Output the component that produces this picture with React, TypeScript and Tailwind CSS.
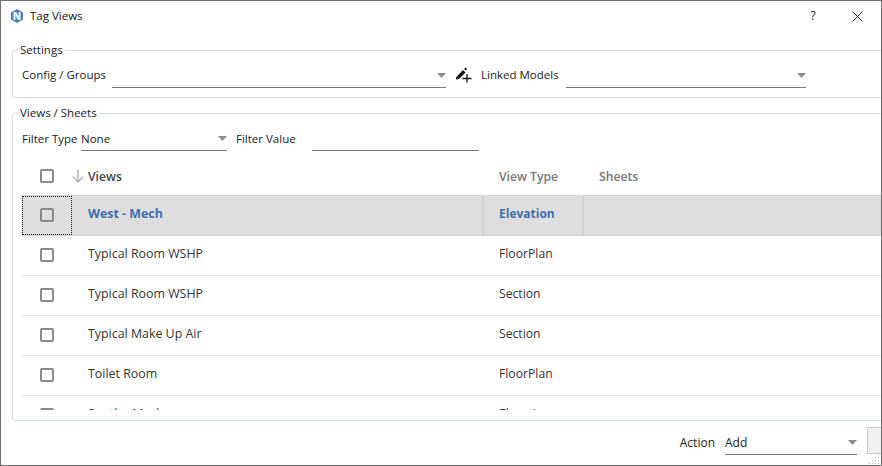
const rows = [
  { name: 'Typical Room WSHP', type: 'FloorPlan' },
  { name: 'Typical Room WSHP', type: 'Section' },
  { name: 'Typical Make Up Air', type: 'Section' },
  { name: 'Toilet Room', type: 'FloorPlan' },
  { name: 'South - Mech', type: 'Elevation' },
];

function Caret() {
  return (
    <svg width="9" height="5" viewBox="0 0 9 5" className="shrink-0">
      <path d="M0 0h9L4.5 5z" fill="#8c8c8c" />
    </svg>
  );
}

function Combo({ value, className }: { value?: string; className: string }) {
  return (
    <div className={`flex items-center justify-between border-b border-[#777] ${className}`}>
      <span className="text-[#222]">{value}</span>
      <Caret />
    </div>
  );
}

function Check() {
  return <div className="w-[14px] h-[14px] shrink-0 rounded-[2px] border-2 border-[#8a8a8a]" />;
}

export default function App() {
  return (
    <div className="relative w-[882px] h-[466px] flex flex-col overflow-hidden border border-[#6e6e6e] bg-white text-[11.5px] leading-4 text-[#333] font-['Open_Sans','Noto_Sans',sans-serif]">
      {/* title bar */}
      <div className="h-[30px] shrink-0 flex items-center pl-[9px]">
        <svg width="14" height="14" viewBox="0 0 14 14" className="shrink-0">
          <path d="M7 0l6 3.5v7L7 14 1 10.5v-7z" fill="#3f83c4" />
          <text x="7" y="11" textAnchor="middle" fontSize="10" fontWeight="800" fill="#fff" fontFamily="Open Sans">N</text>
        </svg>
        <span className="ml-[6px] text-[#111]">Tag Views</span>
        <span className="ml-auto text-[12px] text-[#222] w-[12px] text-center">?</span>
        <svg width="11" height="11" viewBox="0 0 11 11" className="ml-[33px] mr-[18px]">
          <path d="M.5.5l10 10M10.5.5l-10 10" stroke="#222" strokeWidth="1" />
        </svg>
      </div>

      {/* settings group */}
      <fieldset className="mt-[11px] ml-[11px] -mr-[10px] h-[56px] shrink-0 rounded-[3px] border border-[#d5dfe5] pl-[9px]">
        <legend className="-ml-[4px] px-[2px] text-[#222]">Settings</legend>
        <div className="flex items-end h-[29px] mt-[1px]">
          <span className="w-[90px] pt-[3px] self-center text-[#222]">Config / Groups</span>
          <Combo className="w-[334px] h-[24px]" />
          <svg width="17" height="17" viewBox="0 0 17 17" className="ml-[9px] mt-[2px] self-center shrink-0">
            <path d="M1 11.5L8 4l2.5 2.5L4 13l-3 .5z" fill="#111" />
            <path d="M9 3l1.5-1.5L12 3l-1 1.5z" fill="#111" />
            <path d="M12 8v8.5M7.5 12.5H16.5" stroke="#111" strokeWidth="1.3" />
          </svg>
          <span className="ml-[9px] w-[85px] pt-[3px] self-center text-[#222]">Linked Models</span>
          <Combo className="w-[240px] h-[24px]" />
        </div>
      </fieldset>

      {/* views / sheets group */}
      <fieldset className="mt-[7px] ml-[11px] -mr-[10px] h-[316px] shrink-0 rounded-[3px] border border-[#d5dfe5] pl-[9px]">
        <legend className="-ml-[4px] px-[2px] text-[#222]">Views / Sheets</legend>
        <div className="flex items-end h-[24px] mt-[6px]">
          <span className="w-[59px] self-center text-[#222]">Filter Type</span>
          <Combo value="None" className="w-[146px] h-[24px]" />
          <span className="ml-[9px] w-[76px] self-center text-[#222]">Filter Value</span>
          <div className="w-[167px] h-[24px] border-b border-[#777]" />
        </div>

        <div className="h-[254px] overflow-hidden mt-[5px] text-[12.4px]">
          {/* header */}
          <div className="h-[39px] flex items-center font-semibold text-[12.2px]">
            <div className="w-[50px] flex justify-center"><Check /></div>
            <svg width="12" height="14" viewBox="0 0 12 14" className="shrink-0">
              <path d="M6 .5v12.5M.8 7.6L6 13l5.2-5.4" fill="none" stroke="#aaa" strokeWidth="1.3" />
            </svg>
            <span className="ml-[4px] w-[411px] pt-[2px] text-[#444]">Views</span>
            <span className="w-[100px] pt-[2px] text-[#777]">View Type</span>
            <span className="pt-[2px] text-[#777]">Sheets</span>
          </div>

          {/* selected row */}
          <div className="h-[41px] flex bg-[#dedede] border-y border-[#d3d3d3] font-bold text-[#3f70ae]">
            <div className="w-[50px] shrink-0 flex items-center justify-center pb-[2px] border border-dotted border-[#222]"><Check /></div>
            <div className="w-[410px] shrink-0 pl-[16px] flex items-center pb-[3px]">West - Mech</div>
            <div className="w-[100px] shrink-0 pl-[15px] flex items-center pb-[3px] text-[12px] border-l-2 border-[#d3d3d3]">Elevation</div>
            <div className="flex-1 border-l-2 border-[#d3d3d3]" />
          </div>

          {rows.map((row, i) => (
            <div key={i} className="h-[40px] flex items-center border-b border-[#e3e3e3]">
              <div className="w-[50px] shrink-0 flex justify-center pb-[2px]"><Check /></div>
              <div className="w-[411px] shrink-0 pl-[16px] pb-[3px]">{row.name}</div>
              <div className="pl-[16px] pb-[3px] text-[12.2px]">{row.type}</div>
            </div>
          ))}
        </div>
      </fieldset>

      {/* action bar */}
      <div className="flex-1 flex items-start justify-end pt-[6px] text-[12px]">
        <span className="mt-[8px] text-[#222]">Action</span>
        <Combo value="Add" className="ml-[10px] mt-[4px] w-[132px] h-[24px]" />
        <div className="ml-[10px] w-[14px] h-[27px] border border-r-0 border-[#c8c8c8] bg-[#f0f0f0]" />
      </div>

      {/* resize grip */}
      <svg width="12" height="12" viewBox="0 0 12 12" className="absolute right-0 bottom-0">
        <path d="M9 1h1v1H9zM6 4h1v1H6zM9 4h1v1H9zM3 7h1v1H3zM6 7h1v1H6zM9 7h1v1H9zM0 10h1v1H0zM3 10h1v1H3zM6 10h1v1H6zM9 10h1v1H9z" fill="#b8b8b8" />
      </svg>
    </div>
  );
}
